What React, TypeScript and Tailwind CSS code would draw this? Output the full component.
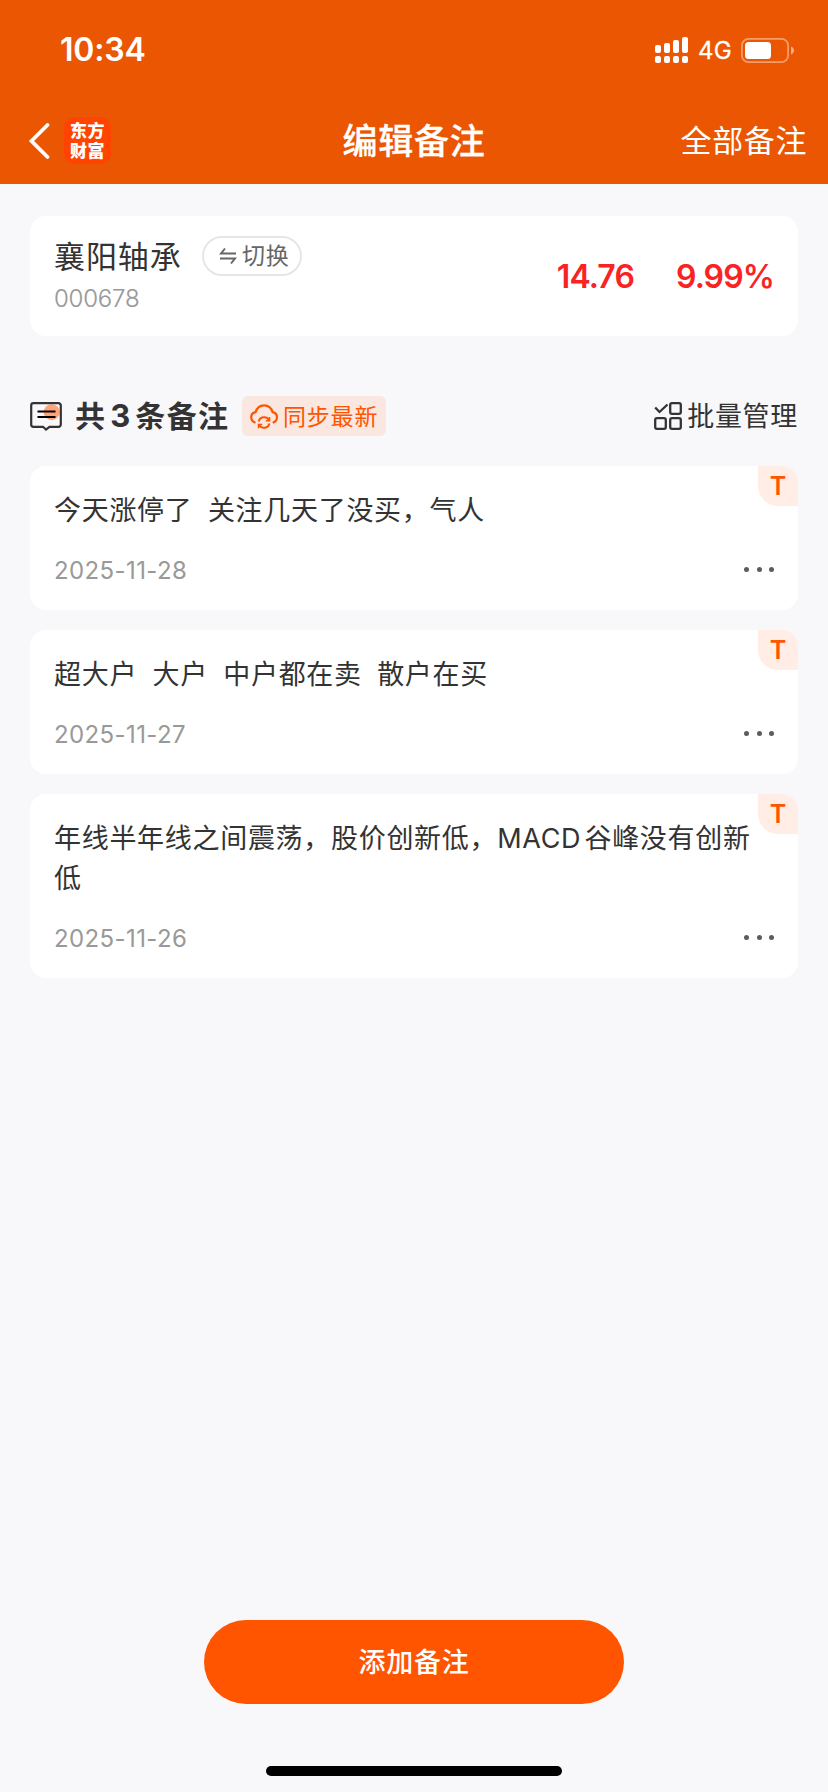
import { useState } from "react";

type Note = {
    id: number;
    text: string;
    date: string;
};

const notes: Note[] = [
    { id: 1, text: "今天涨停了  关注几天了没买，气人", date: "2025-11-28" },
    { id: 2, text: "超大户  大户  中户都在卖  散户在买", date: "2025-11-27" },
    { id: 3, text: "年线半年线之间震荡，股价创新低，MACD\u200a谷峰没有创新低", date: "2025-11-26" },
];

const StatusBar = () => {
    return (
        <div className="flex h-[100px] items-center justify-between pl-[60px] pr-[34px]">
            <p className="text-[32px] leading-10 font-semibold tracking-[-0.2px]">10:34</p>
            <div className="flex items-center">
                <svg width="33" height="26" viewBox="0 0 33 26" fill="#fff">
                    <rect x="0" y="8" width="6" height="8" rx="2" />
                    <rect x="9" y="6" width="6" height="10" rx="2" />
                    <rect x="18" y="3" width="6" height="13" rx="2" />
                    <rect x="27" y="0" width="6" height="16" rx="2" />
                    <rect x="0" y="19" width="6" height="7" rx="2" />
                    <rect x="9" y="19" width="6" height="7" rx="2" />
                    <rect x="18" y="19" width="6" height="7" rx="2" />
                    <rect x="27" y="19" width="6" height="7" rx="2" />
                </svg>
                <span className="ml-[10px] w-[43px] pt-px text-[24px] leading-[26px] tracking-[0.300px] [-webkit-text-stroke:0.300px]">4G</span>
                <svg width="53" height="25" viewBox="0 0 53 25" fill="none">
                    <rect x="0.9" y="0.9" width="46.2" height="23.2" rx="6.5" stroke="#fff" strokeOpacity="0.42" strokeWidth="1.8" />
                    <rect x="4" y="4" width="26" height="17" rx="3.5" fill="#fff" />
                    <path d="M50 8.5c2 .8 3 2.200 3 4s-1 3.200-3 4z" fill="#fff" fillOpacity="0.5" />
                </svg>
            </div>
        </div>
    );
};

const NavBar = () => {
    return (
        <div className="grid h-[84px] grid-cols-3 items-center pl-7 pr-[21px] pb-[3px]">
            <div className="flex items-center">
                <button className="cursor-pointer">
                    <svg width="22" height="36" viewBox="0 0 22 36" fill="none">
                        <path d="M19.500 2 3.500 18l16 16" stroke="#fff" strokeWidth="3.800" strokeLinecap="round" />
                    </svg>
                </button>
                <div className="ml-[14px] flex h-[47px] w-[47px] flex-col items-center justify-center rounded-[10px] bg-[#ff4400] text-[17px] leading-[20px] font-black tracking-[0.500px]">
                    <span>东方</span>
                    <span>财富</span>
                </div>
            </div>
            <h1 className="pr-[7px] text-center text-[35px] leading-10 font-medium tracking-[0.800px] whitespace-nowrap [-webkit-text-stroke:0.300px]">编辑备注</h1>
            <button className="cursor-pointer text-right text-[31px] leading-10 tracking-[0.600px]">全部备注</button>
        </div>
    );
};

const StockCard = () => {
    return (
        <div className="flex h-[120px] items-start justify-between rounded-2xl bg-white pt-5 pl-6 pr-[24px]">
            <div className="flex flex-col">
                <div className="flex items-center">
                    <p className="w-[148px] pt-[2px] text-[31px] leading-[38px] tracking-[0.900px]">襄阳轴承</p>
                    <button className="flex h-10 w-[100px] cursor-pointer items-center rounded-full border-2 border-[#e6e6e6] pl-[15px] text-[23px] leading-8 tracking-[0.800px] text-[#666]">
                        <svg className="mr-[5px]" width="18" height="18" viewBox="0 0 18 18" fill="none" stroke="#666" strokeWidth="2">
                            <path d="M17 6.500H2L6 1.500" />
                            <path d="M1 11.500h15L12 16.500" />
                        </svg>
                        切换
                    </button>
                </div>
                <p className="mt-[7px] text-[24px] leading-8 font-light tracking-[-0.200px] text-[#999] [-webkit-text-stroke:0.200px]">000678</p>
            </div>
            <div className="flex gap-[42px] pt-[21px] text-[32px] leading-10 font-semibold text-[#fa2323]">
                <span className="tracking-[-0.900px]">14.76</span>
                <span className="tracking-[-0.900px]">9.99%</span>
            </div>
        </div>
    );
};

const SectionHeader = ({ count }: { count: number }) => {
    return (
        <div className="flex h-10 items-center justify-between">
            <div className="flex items-center">
                <svg width="32" height="29" viewBox="0 0 32 29" fill="none">
                    <circle cx="21.700" cy="10.200" r="8" fill="#ffa47a" />
                    <path d="M3.500 1.200h25a2.300 2.300 0 0 1 2.300 2.300v19a2.300 2.300 0 0 1-2.300 2.300h-9L16 27.500l-3-2.700H3.500A2.300 2.300 0 0 1 1.200 22.500v-19A2.300 2.300 0 0 1 3.500 1.200z" stroke="#333" strokeWidth="2.200" />
                    <path d="M7.500 9.500h18M7.500 15h18" stroke="#000" strokeWidth="2.200" />
                </svg>
                <p className="ml-[13px] flex w-[167px] text-[30px] leading-10 font-bold tracking-[1.300px]">
                    共<span className="mr-[5px] ml-[4px] text-[31px] tracking-normal">{count}</span>条备注
                </p>
                <button className="flex h-10 w-36 cursor-pointer items-center rounded-md bg-[#f9e7e0] pt-px pl-2 text-[23px] leading-8 tracking-[0.800px] text-[#ff5500]">
                    <svg className="mr-[4px]" width="29" height="26" viewBox="0 0 29 26" fill="none" stroke="#ff5500" strokeWidth="2.200">
                        <path d="M5.500 18.800C2.800 17.800 1.200 15.800 1.200 13.300c0-2.700 1.900-4.700 4.400-5.200C6.800 4 10.200 1.300 14.100 1.300s7.300 2.700 8.500 6.800c2.500.5 4.400 2.500 4.400 5.200 0 2.500-1.600 4.500-4.300 5.500" />
                        <path d="M8.700 17.500a5.600 5.600 0 0 1 10.300-1.500M19.400 19.500a5.600 5.600 0 0 1-10.300 1.500" strokeWidth="2" />
                        <path d="M19.500 13v3.700h-3.700M8.500 24.200v-3.700h3.700" strokeWidth="1.600" />
                    </svg>
                    同步最新
                </button>
            </div>
            <button className="flex cursor-pointer items-center text-[27px] leading-10 tracking-[0.700px]">
                <svg className="mr-[5px]" width="28" height="28" viewBox="0 0 28 28" fill="none" stroke="#333" strokeWidth="2.300">
                    <path d="M1.200 5.500 5.500 10l8-7.500" />
                    <rect x="16.200" y="1.200" width="10.600" height="10.600" rx="1.800" />
                    <rect x="1.200" y="16.200" width="10.600" height="10.600" rx="1.800" />
                    <rect x="16.200" y="16.200" width="10.600" height="10.600" rx="1.800" />
                </svg>
                <span className="pt-[2px]">批量管理</span>
            </button>
        </div>
    );
};

const NoteCard = ({ note }: { note: Note }) => {
    return (
        <div className="relative rounded-2xl bg-white px-6 pt-[25px] pb-6">
            <span className="absolute top-0 right-0 flex h-10 w-10 items-center justify-center rounded-tr-2xl rounded-bl-[20px] bg-[#ffede6] text-[25px] leading-none font-semibold text-[#ff5500]">
                T
            </span>
            <p className="w-[706px] text-[27px] leading-10 tracking-[0.700px] whitespace-pre-wrap [word-spacing:-0.600px]">{note.text}</p>
            <div className="mt-[25px] flex h-[30px] items-center justify-between">
                <p className="text-[24px] leading-[30px] tracking-[0.400px] text-[#999]">{note.date}</p>
                <button className="mb-[3px] flex cursor-pointer gap-[7.500px]">
                    <i className="h-[5px] w-[5px] rounded-full bg-[#5c5c5c]" />
                    <i className="h-[5px] w-[5px] rounded-full bg-[#5c5c5c]" />
                    <i className="h-[5px] w-[5px] rounded-full bg-[#5c5c5c]" />
                </button>
            </div>
        </div>
    );
};

const App = () => {
    const [list] = useState<Note[]>(notes);

    return (
        <div lang="zh-CN" className="flex h-[1792px] w-[828px] flex-col bg-[#f8f8fb] font-['Inter','Noto_Sans_CJK_SC',sans-serif] text-[#333]">
            <header className="bg-[#eb5602] text-white">
                <StatusBar />
                <NavBar />
            </header>

            <main className="flex flex-1 flex-col px-[30px] pt-8">
                <StockCard />
                <div className="mt-[60px] mb-[30px]">
                    <SectionHeader count={list.length} />
                </div>
                <div className="flex flex-col gap-5">
                    {list.map((note) => (
                        <NoteCard key={note.id} note={note} />
                    ))}
                </div>
            </main>

            <footer className="flex flex-col items-center pb-4">
                <button className="h-[84px] w-[420px] cursor-pointer rounded-full bg-[#ff5500] pt-[2px] text-[27px] font-medium tracking-[0.700px] text-white">
                    添加备注
                </button>
                <div className="mt-[62px] h-[10px] w-[296px] rounded-full bg-black" />
            </footer>
        </div>
    );
};

export default App;
